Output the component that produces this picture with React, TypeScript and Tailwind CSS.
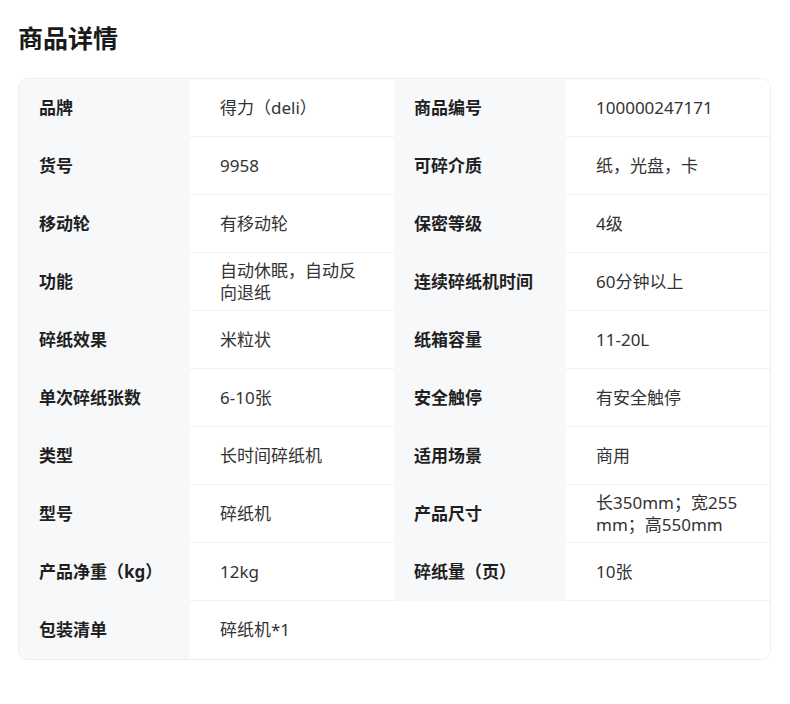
import React from "react";

const rows: [string, string, string, string][] = [
  ["品牌", "得力（deli）", "商品编号", "100000247171"],
  ["货号", "9958", "可碎介质", "纸，光盘，卡"],
  ["移动轮", "有移动轮", "保密等级", "4级"],
  ["功能", "自动休眠，自动反向退纸", "连续碎纸机时间", "60分钟以上"],
  ["碎纸效果", "米粒状", "纸箱容量", "11-20L"],
  ["单次碎纸张数", "6-10张", "安全触停", "有安全触停"],
  ["类型", "长时间碎纸机", "适用场景", "商用"],
  ["型号", "碎纸机", "产品尺寸", "长350mm；宽255mm；高550mm"],
  ["产品净重（kg）", "12kg", "碎纸量（页）", "10张"],
];

function Label({ children }: { children: React.ReactNode }) {
  return (
    <div className="h-[58px] flex items-center pl-5 pr-4 bg-[#f7f8fa] text-[17px] leading-[22px] font-bold text-[#1f1f1f]">
      {children}
    </div>
  );
}

function Value({ children }: { children: React.ReactNode }) {
  return (
    <div className="h-[58px] flex items-center px-[30px] bg-white border-b border-[#eef0f3] text-[17px] leading-[22px] text-[#333] break-all">
      <span>{children}</span>
    </div>
  );
}

export default function App() {
  return (
    <div
      className="w-[790px] h-[704px] bg-white pt-[22px] pl-[18px]"
      style={{ fontFamily: '"Noto Sans", "Noto Sans CJK SC", sans-serif' }}
    >
      <h1 className="text-[25px] leading-[32px] font-bold text-[#1a1a1a]">商品详情</h1>
      <div className="mt-[24px] w-[753px] border border-[#eceef1] rounded-[10px] overflow-hidden grid grid-cols-[171px_204px_172px_1fr]">
        {rows.map((r, i) => (
          <React.Fragment key={i}>
            <Label>{r[0]}</Label>
            <Value>{r[1]}</Value>
            <Label>{r[2]}</Label>
            <Value>{r[3]}</Value>
          </React.Fragment>
        ))}
        <Label>包装清单</Label>
        <div className="col-span-3 h-[58px] flex items-center px-[30px] bg-white text-[17px] leading-[22px] text-[#333]">
          碎纸机*1
        </div>
      </div>
    </div>
  );
}
